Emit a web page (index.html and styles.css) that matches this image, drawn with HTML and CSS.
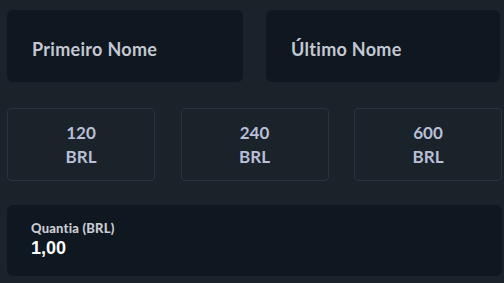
FILE: index.html
```html
<!DOCTYPE html>
<html lang="pt">
<head>
<meta charset="utf-8">
<link rel="stylesheet" href="styles.css">
</head>
<body>
<div class="form">
  <div class="names">
    <div class="field"><span class="placeholder">Primeiro Nome</span></div>
    <div class="field"><span class="placeholder">Último Nome</span></div>
  </div>
  <div class="amounts">
    <button class="amount">120<br>BRL</button>
    <button class="amount">240<br>BRL</button>
    <button class="amount">600<br>BRL</button>
  </div>
  <div class="quantity">
    <div class="q-label">Quantia (BRL)</div>
    <div class="q-value">1,00</div>
  </div>
</div>
</body>
</html>
```
FILE: styles.css
```css
html, body {
  margin: 0;
  padding: 0;
  background: #1a222a;
}
.form {
  padding: 10px 2px 0 7px;
  display: flex;
  flex-direction: column;
  font-family: Lato, "Noto Sans", sans-serif;
}
.names {
  display: grid;
  grid-template-columns: 236px 234px;
  column-gap: 23px;
}
.field {
  height: 72px;
  box-sizing: border-box;
  background: #0f1720;
  border-radius: 6px;
  display: flex;
  align-items: center;
  padding: 5px 0 0 25px;
}
.placeholder {
  color: #c3c8d3;
  font-weight: 700;
  font-size: 18px;
  letter-spacing: 0.3px;
}
.amounts {
  margin-top: 26px;
  display: grid;
  grid-template-columns: 148px 148px 148px;
  column-gap: 25.5px;
}
.amount {
  height: 73px;
  background: #1a222a;
  border: 1px solid #2b343d;
  border-radius: 4px;
  color: #b8bfd6;
  font-family: Lato, "Noto Sans", sans-serif;
  font-weight: 700;
  font-size: 17px;
  line-height: 24px;
  padding: 1px 0 0 0;
}
.quantity {
  margin-top: 24px;
  width: 495px;
  height: 71px;
  box-sizing: border-box;
  background: #0f1720;
  border-radius: 6px;
  padding: 16px 24px 0 24px;
}
.q-label {
  color: #c9ccd3;
  font-weight: 900;
  font-size: 13px;
  line-height: 14px;
  letter-spacing: 0.2px;
}
.q-value {
  color: #ffffff;
  font-family: "Liberation Sans", Arial, sans-serif;
  font-weight: 700;
  font-size: 18px;
  line-height: 20px;
  margin-top: 3px;
}
```
